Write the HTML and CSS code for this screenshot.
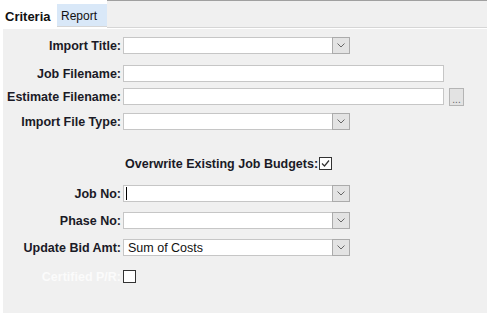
FILE: index.html
```html
<!DOCTYPE html>
<html>
<head>
    <meta charset="utf-8">
    <link rel="stylesheet" href="styles.css">
</head>
<body>
<div class="tabs">
    <div class="tab tab-active">Criteria</div>
    <div class="tab tab-report">Report</div>
    <div class="tab-fill"></div>
</div>

<div class="panel">
    <div class="row row-title">
        <label class="field-label">Import Title:</label>
        <div class="select">
            <span class="select-value"></span>
            <span class="select-btn"><svg width="8" height="5" viewBox="0 0 8 5"><path d="M0.5 0.5 L4 4 L7.5 0.5" fill="none" stroke="#666" stroke-width="1"/></svg></span>
        </div>
    </div>

    <div class="row row-job-file">
        <label class="field-label">Job Filename:</label>
        <input class="text-input" type="text">
    </div>

    <div class="row row-est-file">
        <label class="field-label">Estimate Filename:</label>
        <input class="text-input" type="text">
        <button class="browse-btn">...</button>
    </div>

    <div class="row row-file-type">
        <label class="field-label">Import File Type:</label>
        <div class="select">
            <span class="select-value"></span>
            <span class="select-btn"><svg width="8" height="5" viewBox="0 0 8 5"><path d="M0.5 0.5 L4 4 L7.5 0.5" fill="none" stroke="#666" stroke-width="1"/></svg></span>
        </div>
    </div>

    <div class="row row-overwrite">
        <span class="inline-label">Overwrite Existing Job Budgets:</span>
        <span class="checkbox"><svg width="11" height="11" viewBox="0 0 11 11"><path d="M2 5.5 L4.5 8 L9 2.5" fill="none" stroke="#333" stroke-width="1.2"/></svg></span>
    </div>

    <div class="row row-job-no">
        <label class="field-label">Job No:</label>
        <div class="select">
            <span class="select-value"><span class="caret"></span></span>
            <span class="select-btn"><svg width="8" height="5" viewBox="0 0 8 5"><path d="M0.5 0.5 L4 4 L7.5 0.5" fill="none" stroke="#666" stroke-width="1"/></svg></span>
        </div>
    </div>

    <div class="row row-phase">
        <label class="field-label">Phase No:</label>
        <div class="select">
            <span class="select-value"></span>
            <span class="select-btn"><svg width="8" height="5" viewBox="0 0 8 5"><path d="M0.5 0.5 L4 4 L7.5 0.5" fill="none" stroke="#666" stroke-width="1"/></svg></span>
        </div>
    </div>

    <div class="row row-bid">
        <label class="field-label">Update Bid Amt:</label>
        <div class="select">
            <span class="select-value">Sum of Costs</span>
            <span class="select-btn"><svg width="8" height="5" viewBox="0 0 8 5"><path d="M0.5 0.5 L4 4 L7.5 0.5" fill="none" stroke="#666" stroke-width="1"/></svg></span>
        </div>
    </div>

    <div class="row row-certified">
        <label class="field-label field-label-disabled">Certified P/R:</label>
        <span class="checkbox"></span>
    </div>
</div>
</body>
</html>
```

FILE: styles.css
```css
/* Page base */
body {
    margin: 0;
    background: #ffffff;
    font-family: "Liberation Sans", Arial, sans-serif;
    font-size: 12px;
    color: #1a1a26;
}

/* Tab strip */
.tabs {
    display: flex;
    align-items: flex-start;
    height: 28px;
}

.tab {
    box-sizing: border-box;
    white-space: nowrap;
}

.tab-active {
    width: 57px;
    height: 28px;
    padding: 9px 0 0 5px;
    background: #ffffff;
    font-size: 13px;
    font-weight: bold;
    color: #111;
}

.tab-report {
    width: 50px;
    height: 23px;
    margin-top: 4px;
    padding: 5px 0 0 4px;
    background: #d9e8f8;
    border-bottom: 1px solid #d6d6d6;
    color: #111;
}

.tab-fill {
    flex: 1;
    height: 28px;
    box-sizing: border-box;
    background: #f0f0f0;
    border-top: 1px solid #a0a0a0;
    border-bottom: 1px solid #d6d6d6;
}

/* Criteria panel */
.panel {
    margin: 1px 0 2px 3px;
    height: 284px;
    box-sizing: border-box;
    padding-top: 8px;
    background: #f0f0f0;
}

.row {
    display: flex;
    align-items: center;
    height: 17px;
}

.row-job-file { margin-top: 11px; }
.row-est-file { margin-top: 6px; }
.row-file-type { margin-top: 8px; }
.row-overwrite { margin-top: 25px; padding-left: 122px; }
.row-job-no { margin-top: 13px; }
.row-phase { margin-top: 10px; }
.row-bid { margin-top: 10px; }
.row-certified { margin-top: 12px; }

.field-label {
    display: flex;
    justify-content: flex-end;
    width: 118px;
    margin-right: 2px;
    white-space: nowrap;
    font-size: 12.5px;
    font-weight: bold;
}

.field-label-disabled {
    color: #fbfbfb;
}

.inline-label {
    font-size: 12.5px;
    font-weight: bold;
    white-space: nowrap;
    margin-right: 1px;
}

/* Inputs */
.text-input {
    box-sizing: border-box;
    width: 321px;
    height: 17px;
    margin: 0;
    padding: 0 3px;
    border: 1px solid #c6c6c6;
    background: #ffffff;
    font: 12px "Liberation Sans", Arial, sans-serif;
    outline: none;
}

.browse-btn {
    box-sizing: border-box;
    width: 15px;
    height: 18px;
    margin: 0 0 0 5px;
    padding: 0 0 1px;
    display: flex;
    align-items: flex-end;
    justify-content: center;
    border: 1px solid #b4b4b4;
    background: #e3e3e3;
    color: #666;
    font: 10px "Liberation Sans", Arial, sans-serif;
    line-height: 8px;
}

.select {
    box-sizing: border-box;
    display: flex;
    width: 227px;
    height: 17px;
    border: 1px solid #c6c6c6;
    background: #ffffff;
}

.select-value {
    flex: 1;
    display: flex;
    align-items: center;
    padding-left: 4px;
    font-size: 12.5px;
    color: #111;
    white-space: nowrap;
}

.select-btn {
    box-sizing: border-box;
    display: flex;
    align-items: center;
    justify-content: center;
    width: 18px;
    height: 17px;
    margin: -1px -1px -1px 0;
    border: 1px solid #ababab;
    background: #e3e3e3;
}

.caret {
    display: block;
    width: 0;
    height: 13px;
    margin-left: -2px;
    border-left: 1px solid #000;
}

/* Checkboxes */
.checkbox {
    box-sizing: border-box;
    display: flex;
    align-items: center;
    justify-content: center;
    width: 13px;
    height: 13px;
    border: 1px solid #333;
    background: #ffffff;
}
```
